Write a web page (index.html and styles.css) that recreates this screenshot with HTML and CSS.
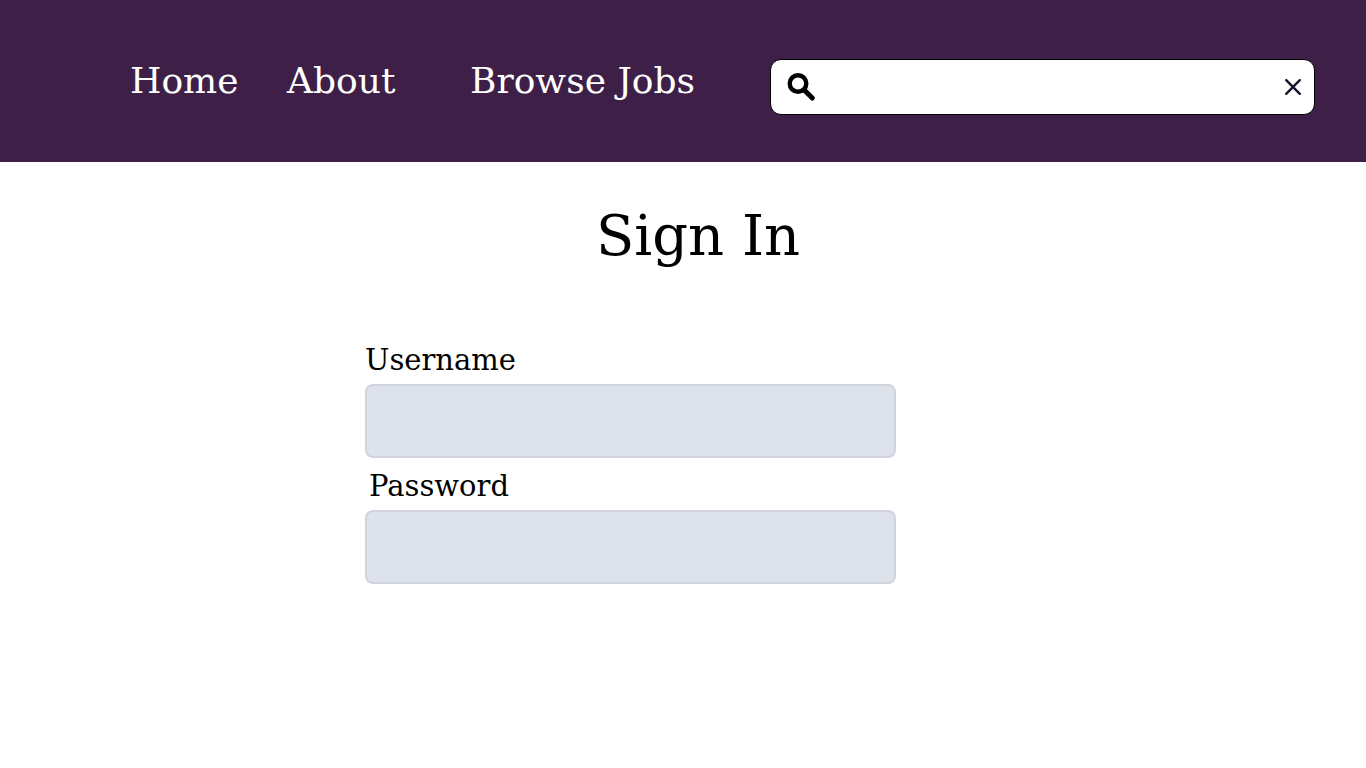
FILE: index.html
```html
<!DOCTYPE html>
<html lang="en">
<head>
  <meta charset="utf-8">
  <meta name="viewport" content="width=device-width, initial-scale=1">
  <title>Sign In</title>
  <link rel="stylesheet" href="styles.css">
</head>
<body>
  <header class="site-header">
    <nav class="site-nav" aria-label="Main">
      <a class="nav-link" href="#home">Home</a>
      <a class="nav-link" href="#about">About</a>
      <a class="nav-link" href="#jobs">Browse Jobs</a>
    </nav>
    <form class="search" role="search">
      <button class="icon-button" type="submit" aria-label="Search">
        <svg width="30" height="30" viewBox="0 0 30 30" fill="none" stroke="#000" aria-hidden="true">
          <circle cx="12" cy="11.5" r="8.3" stroke-width="4.4"/>
          <path d="M18.2 18L26.3 26" stroke-width="5" stroke-linecap="round"/>
        </svg>
      </button>
      <input class="search-input" type="text" aria-label="Search jobs">
      <button class="icon-button" type="reset" aria-label="Clear search">
        <svg width="18" height="18" viewBox="0 0 18 18" fill="none" stroke="#14142b" stroke-width="2.4" stroke-linecap="round" aria-hidden="true">
          <path d="M2.2 2.2L15.8 15.8M15.8 2.2L2.2 15.8"/>
        </svg>
      </button>
    </form>
  </header>
  <main class="sign-in">
    <h1 class="title">Sign In</h1>
    <form class="sign-in-form">
      <label class="field-label" for="username">Username</label>
      <input class="field" id="username" type="text" autocomplete="username">
      <label class="field-label field-label-inset" for="password">Password</label>
      <input class="field" id="password" type="password" autocomplete="current-password">
    </form>
  </main>
</body>
</html>
```

FILE: styles.css
```css
* {
  box-sizing: border-box;
}

body {
  margin: 0;
  background: #fff;
  color: #000;
  font-family: "DejaVu Serif", serif;
}

.site-header {
  display: flex;
  align-items: flex-start;
  padding: 59px 51px 47px 130px;
  background: #3d1f47;
}

.site-nav {
  display: grid;
  grid-template-columns: 157px 183px 300px;
}

.nav-link {
  color: #fff;
  font-size: 36px;
  line-height: 44px;
  text-decoration: none;
  white-space: nowrap;
}

.search {
  display: flex;
  flex: 1;
  align-items: center;
  min-width: 0;
  height: 56px;
  padding: 0 12px 0 15px;
  border: 1px solid #000;
  border-radius: 11px;
  background: #fff;
}

.icon-button {
  display: flex;
  padding: 0;
  border: 0;
  background: none;
}

.search-input {
  flex: 1;
  min-width: 0;
  height: 40px;
  padding: 0 12px;
  border: 0;
  outline: 0;
  background: none;
  font: inherit;
  font-size: 20px;
}

.sign-in {
  padding: 36px 0;
}

.title {
  margin: 0 0 60px;
  padding-left: 30px;
  font-size: 56px;
  font-weight: 400;
  line-height: 76px;
  text-align: center;
}

.sign-in-form {
  display: flex;
  flex-direction: column;
  max-width: 896px;
  padding-left: 365px;
}

.field-label {
  padding-top: 2px;
  font-size: 29px;
  line-height: 48px;
}

.field-label-inset {
  margin-top: 2px;
  padding-left: 4px;
}

.field {
  height: 74px;
  padding: 0 16px;
  border: 2px solid #cfd4de;
  border-radius: 8px;
  background: #dee2eb;
  font: inherit;
  font-size: 24px;
}
```
